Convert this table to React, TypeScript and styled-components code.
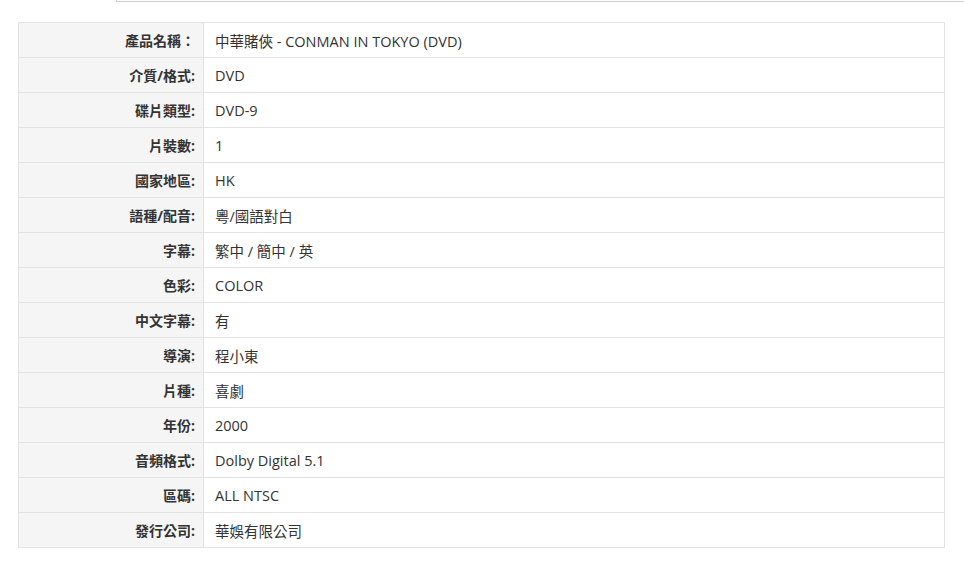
import React from "react";
import styled, { createGlobalStyle } from "styled-components";

const Global = createGlobalStyle`
  html, body { margin: 0; padding: 0; background: #fff; }
  body { font-family: "Open Sans", "Noto Sans CJK TC", sans-serif; color: #333; }
`;

const Page = styled.div`
  display: flex;
  flex-direction: column;
  padding: 0 19px 0 18px;
`;

const TopBar = styled.div`
  height: 1px;
  margin: 0 -19px 20px 98px;
  border-left: 1px solid #d6d6d6;
  border-bottom: 1px solid #cfcfcf;
`;

const Table = styled.table`
  width: 927px;
  border-collapse: collapse;
  font-size: 14.5px;
  table-layout: fixed;
`;

const Row = styled.tr`
  height: 35px;
`;

const Label = styled.th`
  width: 185px;
  box-sizing: border-box;
  padding: 0 8px 0 0;
  background: #f5f5f5;
  border: 1px solid #e3e3e3;
  text-align: right;
  font-weight: 700;
  font-size: 14px;
  color: #333;
`;

const Value = styled.td`
  box-sizing: border-box;
  padding: 0 0 0 11px;
  border: 1px solid #e3e3e3;
  color: #333;
  background: #fff;
`;

const rows: [string, string][] = [
  ["產品名稱：", "中華賭俠 - CONMAN IN TOKYO (DVD)"],
  ["介質/格式:", "DVD"],
  ["碟片類型:", "DVD-9"],
  ["片裝數:", "1"],
  ["國家地區:", "HK"],
  ["語種/配音:", "粵/國語對白"],
  ["字幕:", "繁中 / 簡中 / 英"],
  ["色彩:", "COLOR"],
  ["中文字幕:", "有"],
  ["導演:", "程小東"],
  ["片種:", "喜劇"],
  ["年份:", "2000"],
  ["音頻格式:", "Dolby Digital 5.1"],
  ["區碼:", "ALL NTSC"],
  ["發行公司:", "華娛有限公司"],
];

export default function App() {
  return (
    <>
      <Global />
      <Page>
        <TopBar />
        <Table>
          <tbody>
            {rows.map(([k, v]) => (
              <Row key={k}>
                <Label>{k}</Label>
                <Value>{v}</Value>
              </Row>
            ))}
          </tbody>
        </Table>
      </Page>
    </>
  );
}
